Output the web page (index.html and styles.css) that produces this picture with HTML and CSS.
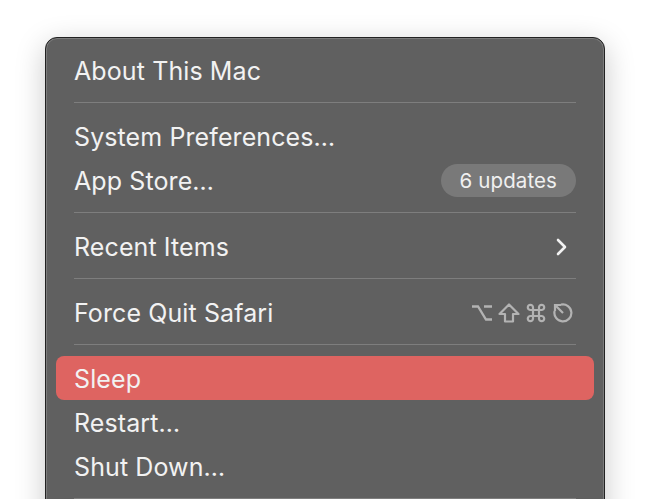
FILE: index.html
```html
<!DOCTYPE html>
<html lang="en">
<head>
  <meta charset="UTF-8">
  <meta name="viewport" content="width=device-width, initial-scale=1.0">
  <title>Apple menu</title>
  <link rel="stylesheet" href="styles.css">
</head>
<body>
  <div class="stage">
    <ul class="menu">
      <li class="menu-item">About This Mac</li>
      <li class="menu-sep"></li>
      <li class="menu-item">System Preferences…</li>
      <li class="menu-item">App Store…<span class="badge">6 updates</span></li>
      <li class="menu-sep"></li>
      <li class="menu-item">Recent Items
        <svg class="chevron" width="14" height="18" viewBox="0 0 14 18">
          <path d="M3 2 L10 9 L3 16" fill="none" stroke="#f2f2f2" stroke-width="2.6" stroke-linecap="round" stroke-linejoin="round"/>
        </svg>
      </li>
      <li class="menu-sep"></li>
      <li class="menu-item">Force Quit Safari
        <span class="keys">
          <!-- option -->
          <svg width="22" height="20" viewBox="0 0 22 20">
            <path d="M1 3.5 H7 L15 16.5 H21 M13 3.5 H21" fill="none" stroke="#b3b3b3" stroke-width="2.3"/>
          </svg>
          <!-- shift -->
          <svg width="22" height="20" viewBox="0 0 22 20">
            <path d="M11 1.5 L20.5 11 H15 V18.5 H7 V11 H1.5 Z" fill="none" stroke="#b3b3b3" stroke-width="2.2" stroke-linejoin="round"/>
          </svg>
          <!-- command -->
          <svg width="22" height="20" viewBox="0 0 22 20">
            <path d="M8 7 V13 M14 7 V13 M8 7 H14 M8 13 H14 M8 7 H5.5 A2.6 2.6 0 1 1 8 4.4 V7 M14 7 V4.4 A2.6 2.6 0 1 1 16.5 7 H14 M14 13 H16.5 A2.6 2.6 0 1 1 14 15.6 V13 M8 13 V15.6 A2.6 2.6 0 1 1 5.5 13 H8" fill="none" stroke="#b3b3b3" stroke-width="2.2"/>
          </svg>
          <!-- escape -->
          <svg width="22" height="20" viewBox="0 0 22 20">
            <path d="M9 1.6 A8.5 8.5 0 1 1 2.6 8" fill="none" stroke="#b3b3b3" stroke-width="2.2"/>
            <path d="M11 10 L3.5 2.5 M3 8 V2 H9" fill="none" stroke="#b3b3b3" stroke-width="2.2"/>
          </svg>
        </span>
      </li>
      <li class="menu-sep"></li>
      <li class="menu-item menu-item_active">Sleep</li>
      <li class="menu-item">Restart…</li>
      <li class="menu-item">Shut Down…</li>
      <li class="menu-sep"></li>
    </ul>
  </div>
</body>
</html>
```

FILE: styles.css
```css
* {
  margin: 0;
  padding: 0;
  box-sizing: border-box;
}

html,
body {
  height: 100%;
  overflow: hidden;
  background-color: #fff;
}

body {
  font-family: Inter, "Noto Sans", sans-serif;
  color: #f2f2f2;
}

.stage {
  padding: 37px 0 0 45px;
}

.menu {
  width: 560px;
  list-style-type: none;
  padding: 10px 10px 40px;
  background-color: #606060;
  border: 1px solid #222;
  border-radius: 12px;
  box-shadow: inset 0 0 0 1px #7c7c7c, 0 8px 30px rgba(0,0,0,.22);
}

.menu-item {
  height: 44px;
  padding: 1px 18px 0;
  display: flex;
  align-items: center;
  justify-content: space-between;
  font-size: 25px;
  letter-spacing: 0.1px;
  border-radius: 8px;
}

.menu-item_active {
  background-color: #de6461;
}

.menu-sep {
  height: 1px;
  margin: 10px 18px 11px;
  background-color: #7e7e7e;
}

.badge {
  height: 33px;
  padding: 0 19px;
  display: flex;
  align-items: center;
  font-size: 20.5px;
  border-radius: 17px;
  background-color: #797979;
  color: #f0f0f0;
}

.chevron {
  margin-right: 7px;
}

.keys {
  display: flex;
  gap: 5px;
  margin-right: 2px;
}
```
